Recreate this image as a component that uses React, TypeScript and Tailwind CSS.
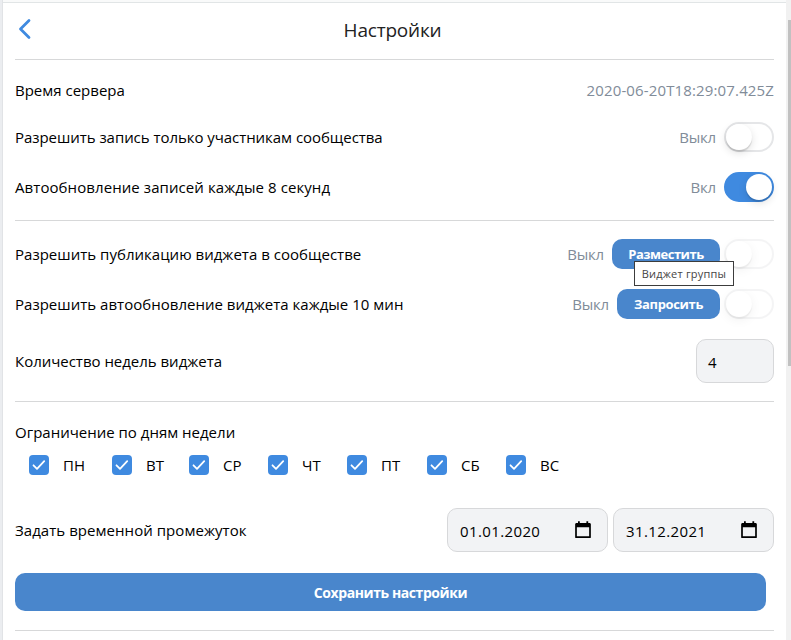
import type { ReactNode } from "react";

const text = "whitespace-nowrap text-[15px] leading-5";

function Row({ label, className, children }: { label: ReactNode; className: string; children?: ReactNode }) {
  return (
    <div className={`flex shrink-0 items-center justify-between ${className}`}>
      {label}
      <div className="flex items-center">{children}</div>
    </div>
  );
}

function Switch({ on = false, disabled = false }: { on?: boolean; disabled?: boolean }) {
  return (
    <div
      className={`flex h-[30px] w-[50px] shrink-0 items-center rounded-full border-2 ${
        on ? "justify-end border-[#3f8ae0] bg-[#3f8ae0]" : "justify-start border-[#e5e6e8] bg-white"
      } ${disabled ? "opacity-40" : ""}`}
    >
      <div className="size-[26px] rounded-full bg-white shadow-[0_3px_8px_rgba(0,0,0,0.12),0_2px_1px_rgba(0,0,0,0.12)]" />
    </div>
  );
}

function Separator() {
  return <div className="h-px shrink-0 bg-[#d7d8d9]" />;
}

function Day({ name, className }: { name: string; className: string }) {
  return (
    <div className={`flex items-center ${className}`}>
      <div className="flex size-5 items-center justify-center rounded bg-[#3f8ae0]">
        <svg width="20" height="20" viewBox="0 0 20 20" fill="none" stroke="white" strokeWidth="1.8" strokeLinecap="round" strokeLinejoin="round">
          <path d="M4.5 10.3 8 13.8l7.2-7.6" />
        </svg>
      </div>
      <span className={`${text} ml-[14px]`}>{name}</span>
    </div>
  );
}

function DateField({ value }: { value: string }) {
  return (
    <div className="flex h-[44px] w-[161px] items-center justify-between rounded-[10px] border border-[#d7d8da] bg-[#f2f3f5] pl-3 pr-[15px]">
      <span className={`${text} pt-[2px] tracking-[0.38px]`}>{value}</span>
      <svg width="16" height="18" viewBox="0 0 16 18" fill="none" className="mr-px">
        <path d="M1 3h14v13.2H1z" stroke="black" strokeWidth="1.7" strokeLinejoin="round" />
        <path d="M1 2h14v4.2H1zM3 .2h1.8v3H3zM11.4 .2h1.8v3h-1.8z" fill="black" />
      </svg>
    </div>
  );
}

export default function App() {
  return (
    <div className="flex h-[640px] w-[791px] overflow-hidden bg-white font-['Open_Sans','Noto_Sans',sans-serif] text-black">
      <div className="w-[3px] shrink-0 border-r border-[#e1e3e6] bg-[#ebedf0]" />
      <div className="flex min-w-0 flex-1 flex-col">
        <div className="h-[3px] shrink-0 border-b border-[#e1e5e6] bg-[#f9fafa]" />
        <main className="flex flex-1 flex-col pl-3 pr-[12px]">
          <header className="grid h-14 shrink-0 grid-cols-[40px_1fr_44px] items-center">
            <svg width="20" height="24" viewBox="0 0 20 24" className="mb-[4px]" fill="none" stroke="#3f8ae0" strokeWidth="2.8" strokeLinecap="round" strokeLinejoin="round">
              <path d="M14 3.5 5.5 12l8.5 8.5" />
            </svg>
            <h1 className="mb-[3px] whitespace-nowrap text-center text-[19px] leading-6 tracking-[-0.2px] text-[#222]">Настройки</h1>
          </header>
          <Separator />
          <div className="h-2 shrink-0" />
          <Row className="h-11" label={<span className={text}>Время сервера</span>}>
            <span className={`${text} tracking-[0.14px] text-[#818c99]`}>2020-06-20T18:29:07.425Z</span>
          </Row>
          <Row className="h-[50px]" label={<span className={`${text} tracking-[-0.05px]`}>Разрешить запись только участникам сообщества</span>}>
            <span className={`${text} mr-2 tracking-[-0.2px] text-[#818c99]`}>Выкл</span>
            <Switch />
          </Row>
          <Row className="h-[50px]" label={<span className={`${text} tracking-[0.08px]`}>Автообновление записей каждые 8 секунд</span>}>
            <span className={`${text} mr-2 tracking-[-0.2px] text-[#818c99]`}>Вкл</span>
            <Switch on />
          </Row>
          <div className="h-2 shrink-0" />
          <Separator />
          <div className="h-2 shrink-0" />
          <Row className="h-[50px]" label={<span className={`${text} tracking-[0.02px]`}>Разрешить публикацию виджета в сообществе</span>}>
            <span className={`${text} mr-2 tracking-[-0.2px] text-[#818c99]`}>Выкл</span>
            <div className="relative mr-1">
              <button className="flex h-[30px] w-[108px] items-center justify-center rounded-[10px] bg-[#4986cc] pt-px text-[13px] font-bold tracking-[-0.5px] text-white">Разместить</button>
              <div className="absolute left-[22px] top-[22px] z-10 flex h-[25px] w-[100px] items-center justify-center whitespace-nowrap border border-[#3c3c3c] bg-white pt-px text-[11px] tracking-[0.2px] text-[#454545]">
                Виджет группы
              </div>
            </div>
            <Switch disabled />
          </Row>
          <Row className="h-[50px]" label={<span className={`${text} tracking-[0.02px]`}>Разрешить автообновление виджета каждые 10 мин</span>}>
            <span className={`${text} mr-2 tracking-[-0.2px] text-[#818c99]`}>Выкл</span>
            <button className="mr-1 flex h-[30px] w-[103px] items-center justify-center rounded-[10px] bg-[#4986cc] pt-px text-[13px] font-bold tracking-[-0.35px] text-white">Запросить</button>
            <Switch disabled />
          </Row>
          <Row className="h-16" label={<span className={`${text} tracking-[-0.02px]`}>Количество недель виджета</span>}>
            <div className="flex h-[44px] w-[78px] items-center rounded-[10px] border border-[#d7d8da] bg-[#f2f3f5] pl-[11px]">
              <span className={`${text} pt-[2px]`}>4</span>
            </div>
          </Row>
          <div className="h-2 shrink-0" />
          <Separator />
          <div className="h-2 shrink-0" />
          <Row className="h-11" label={<span className={text}>Ограничение по дням недели</span>} />
          <div className="ml-[14px] flex h-[22px] shrink-0 items-center">
            <Day name="ПН" className="w-[83px]" />
            <Day name="ВТ" className="w-[77px]" />
            <Day name="СР" className="w-[79px]" />
            <Day name="ЧТ" className="w-[79px]" />
            <Day name="ПТ" className="w-[80px]" />
            <Day name="СБ" className="w-[79px]" />
            <Day name="ВС" className="w-[79px]" />
          </div>
          <div className="h-[22px] shrink-0" />
          <Row className="h-16" label={<span className={`${text} tracking-[0.05px]`}>Задать временной промежуток</span>}>
            <div className="flex gap-[5px]">
              <DateField value="01.01.2020" />
              <DateField value="31.12.2021" />
            </div>
          </Row>
          <button className="mr-2 mt-[11px] h-[38px] shrink-0 rounded-[10px] bg-[#4986cc] text-[14px] font-bold tracking-[-0.42px] text-white">Сохранить настройки</button>
          <div className="h-[19px] shrink-0" />
          <Separator />
        </main>
      </div>
      <div className="flex w-[5px] shrink-0 flex-col bg-[#f1f1f1] pl-[2px] pt-[20px]">
        <div className="h-[346px] bg-[#c1c1c1]" />
      </div>
    </div>
  );
}
